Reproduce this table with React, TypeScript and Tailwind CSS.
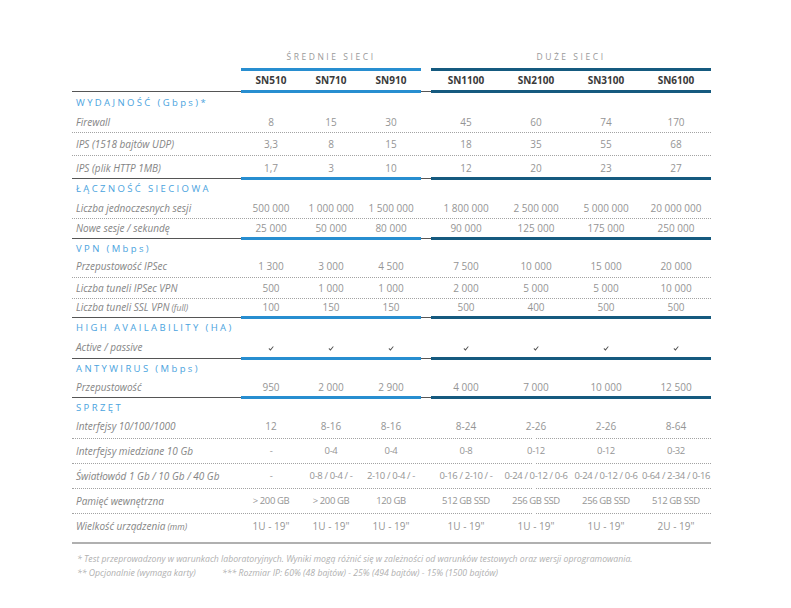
import React, { FC } from 'react';

const COLS = 'grid grid-cols-[169px_60px_60px_60px_10px_70px_70px_70px_70px]';

type Row = {
  label: React.ReactNode;
  mid: React.ReactNode[];
  big: React.ReactNode[];
  h: string;
  tight?: boolean;
};

type Section = {
  title: string;
  titleH: string;
  rows: Row[];
  split?: boolean;
};

const Check: FC = () => (
  <svg width="6" height="5" viewBox="0 0 8 7" className="inline-block mt-[1px]">
    <path d="M0.4 4.0 L2.1 3.0 L3.2 4.5 L6.8 0.4 L7.7 1.2 L3.3 6.6 Z" fill="#505050" />
  </svg>
);

const checks = (n: number) => Array.from({ length: n }, (_, i) => <Check key={i} />);

const sections: Section[] = [
  {
    title: 'WYDAJNOŚĆ (Gbps)*',
    titleH: 'h-[20px]',
    rows: [
      { label: 'Firewall', mid: ['8', '15', '30'], big: ['45', '60', '74', '170'], h: 'h-[19px]' },
      { label: 'IPS (1518 bajtów UDP)', mid: ['3,3', '8', '15'], big: ['18', '35', '55', '68'], h: 'h-[22px]' },
      { label: 'IPS (plik HTTP 1MB)', mid: ['1,7', '3', '10'], big: ['12', '20', '23', '27'], h: 'h-[21px] pt-[3px]' },
    ],
  },
  {
    title: 'ŁĄCZNOŚĆ SIECIOWA',
    titleH: 'h-[18px]',
    rows: [
      {
        label: 'Liczba jednoczesnych sesji',
        mid: ['500 000', '1 000 000', '1 500 000'],
        big: ['1 800 000', '2 500 000', '5 000 000', '20 000 000'],
        h: 'h-[20px]',
      },
      {
        label: 'Nowe sesje / sekundę',
        mid: ['25 000', '50 000', '80 000'],
        big: ['90 000', '125 000', '175 000', '250 000'],
        h: 'h-[18px]',
      },
    ],
  },
  {
    title: 'VPN (Mbps)',
    titleH: 'h-[18px]',
    rows: [
      {
        label: 'Przepustowość IPSec',
        mid: ['1 300', '3 000', '4 500'],
        big: ['7 500', '10 000', '15 000', '20 000'],
        h: 'h-[19px] pb-[2px]',
      },
      {
        label: 'Liczba tuneli IPSec VPN',
        mid: ['500', '1 000', '1 000'],
        big: ['2 000', '5 000', '5 000', '10 000'],
        h: 'h-[20px]',
      },
      {
        label: (
          <>
            Liczba tuneli SSL VPN{' '}
            <span className="ml-[2px] text-[8.5px]">(full)</span>
          </>
        ),
        mid: ['100', '150', '150'],
        big: ['500', '400', '500', '500'],
        h: 'h-[17px]',
      },
    ],
  },
  {
    title: 'HIGH AVAILABILITY (HA)',
    titleH: 'h-[19px]',
    rows: [{ label: 'Active / passive', mid: checks(3), big: checks(4), h: 'h-[19px]' }],
  },
  {
    title: 'ANTYWIRUS (Mbps)',
    titleH: 'h-[18px]',
    rows: [
      {
        label: 'Przepustowość',
        mid: ['950', '2 000', '2 900'],
        big: ['4 000', '7 000', '10 000', '12 500'],
        h: 'h-[18px]',
      },
    ],
  },
  {
    title: 'SPRZĘT',
    titleH: 'h-[19px]',
    split: true,
    rows: [
      {
        label: 'Interfejsy 10/100/1000',
        mid: ['12', '8-16', '8-16'],
        big: ['8-24', '2-26', '2-26', '8-64'],
        h: 'h-[20px] pb-[3px]',
      },
      {
        label: 'Interfejsy miedziane 10 Gb',
        mid: ['-', '0-4', '0-4'],
        big: ['0-8', '0-12', '0-12', '0-32'],
        h: 'h-[24px]',
        tight: true,
      },
      {
        label: 'Światłowód 1 Gb / 10 Gb / 40 Gb',
        mid: ['-', '0-8 / 0-4 / -', '2-10 / 0-4 / -'],
        big: ['0-16 / 2-10 / -', '0-24 / 0-12 / 0-6', '0-24 / 0-12 / 0-6', '0-64 / 2-34 / 0-16'],
        h: 'h-[24px]',
        tight: true,
      },
      {
        label: 'Pamięć wewnętrzna',
        mid: ['> 200 GB', '> 200 GB', '120 GB'],
        big: ['512 GB SSD', '256 GB SSD', '256 GB SSD', '512 GB SSD'],
        h: 'h-[24px]',
        tight: true,
      },
      {
        label: (
          <>
            Wielkość urządzenia{' '}
            <span className="ml-[2px] text-[8.5px]">(mm)</span>
          </>
        ),
        mid: ['1U - 19"', '1U - 19"', '1U - 19"'],
        big: ['1U - 19"', '1U - 19"', '1U - 19"', '2U - 19"'],
        h: 'h-[28px] pb-[4px]',
      },
    ],
  },
];

const SectionLine: FC<{ gray?: boolean }> = ({ gray = true }) => (
  <div className={`${COLS} h-[3px] items-center`}>
    <div className={gray ? 'h-px bg-[#555555]' : ''} />
    <div className="col-span-3 h-[3px] bg-[#288ed0]" />
    <div className={gray ? 'h-px bg-[#555555]' : ''} />
    <div className="col-span-4 h-[3px] bg-[#155a7f]" />
  </div>
);

const Dotted: FC<{ split?: boolean }> = ({ split }) =>
  split ? (
    <div className="flex h-px">
      <div className="w-[460px] border-t border-dotted border-[#a3a3a3]" />
      <div className="w-[4px]" />
      <div className="flex-1 border-t border-dotted border-[#a3a3a3]" />
    </div>
  ) : (
    <div className="h-px border-t border-dotted border-[#a3a3a3]" />
  );

const DataRow: FC<{ row: Row }> = ({ row }) => {
  const cell = row.tight
    ? 'flex items-center justify-center whitespace-nowrap text-[9.5px] tracking-[-0.04em]'
    : 'flex items-center justify-center whitespace-nowrap';
  return (
    <div className={`${COLS} ${row.h} text-[10px] text-[#959595]`}>
      <div className="flex items-baseline self-center pl-[4px] italic text-[#858585] whitespace-nowrap">{row.label}</div>
      {row.mid.map((v, i) => (
        <div key={`m${i}`} className={cell}>
          {v}
        </div>
      ))}
      <div />
      {row.big.map((v, i) => (
        <div key={`b${i}`} className={cell}>
          {v}
        </div>
      ))}
    </div>
  );
};

const App: FC = () => {
  return (
    <div className="min-h-[608px] w-[791px] bg-white font-['Open_Sans',sans-serif]">
      <div className="ml-[72px] w-[639px] pt-[47px]">
        {/* grupy */}
        <div className={`${COLS} h-[21px] text-[8.5px] tracking-[0.3em] text-[#9a9a9a]`}>
          <div />
          <div className="col-span-3 flex items-center justify-center">ŚREDNIE SIECI</div>
          <div />
          <div className="col-span-4 flex items-center justify-center">DUŻE SIECI</div>
        </div>
        <SectionLine gray={false} />
        <div className={`${COLS} h-[19px] text-[10px] font-bold text-[#3a3a3a]`}>
          <div />
          {['SN510', 'SN710', 'SN910'].map((m) => (
            <div key={m} className="flex items-center justify-center">
              {m}
            </div>
          ))}
          <div />
          {['SN1100', 'SN2100', 'SN3100', 'SN6100'].map((m) => (
            <div key={m} className="flex items-center justify-center">
              {m}
            </div>
          ))}
        </div>
        <SectionLine />

        {sections.map((s, si) => (
          <div key={s.title}>
            <div className={`${s.titleH} flex items-center pl-[4px] text-[9.5px] tracking-[0.25em] text-[#4aa3de]`}>
              {s.title}
            </div>
            {s.rows.map((r, ri) => (
              <React.Fragment key={ri}>
                <DataRow row={r} />
                {ri < s.rows.length - 1 && <Dotted split={s.split} />}
              </React.Fragment>
            ))}
            {si < sections.length - 1 ? <SectionLine /> : <div className="h-[2px] bg-[#b0b0b0]" />}
          </div>
        ))}

        <div className="pl-[5px] pt-[8px] text-[8.7px] italic leading-[14px] text-[#b0b0b0]">
          <div className="whitespace-nowrap">
            * Test przeprowadzony w warunkach laboratoryjnych. Wyniki mogą różnić się w zależności od warunków
            testowych oraz wersji oprogramowania.
          </div>
          <div className="flex whitespace-nowrap">
            <span className="w-[145px]">** Opcjonalnie (wymaga karty)</span>
            <span>*** Rozmiar IP: 60% (48 bajtów) - 25% (494 bajtów) - 15% (1500 bajtów)</span>
          </div>
        </div>
      </div>
    </div>
  );
};

export default App;
